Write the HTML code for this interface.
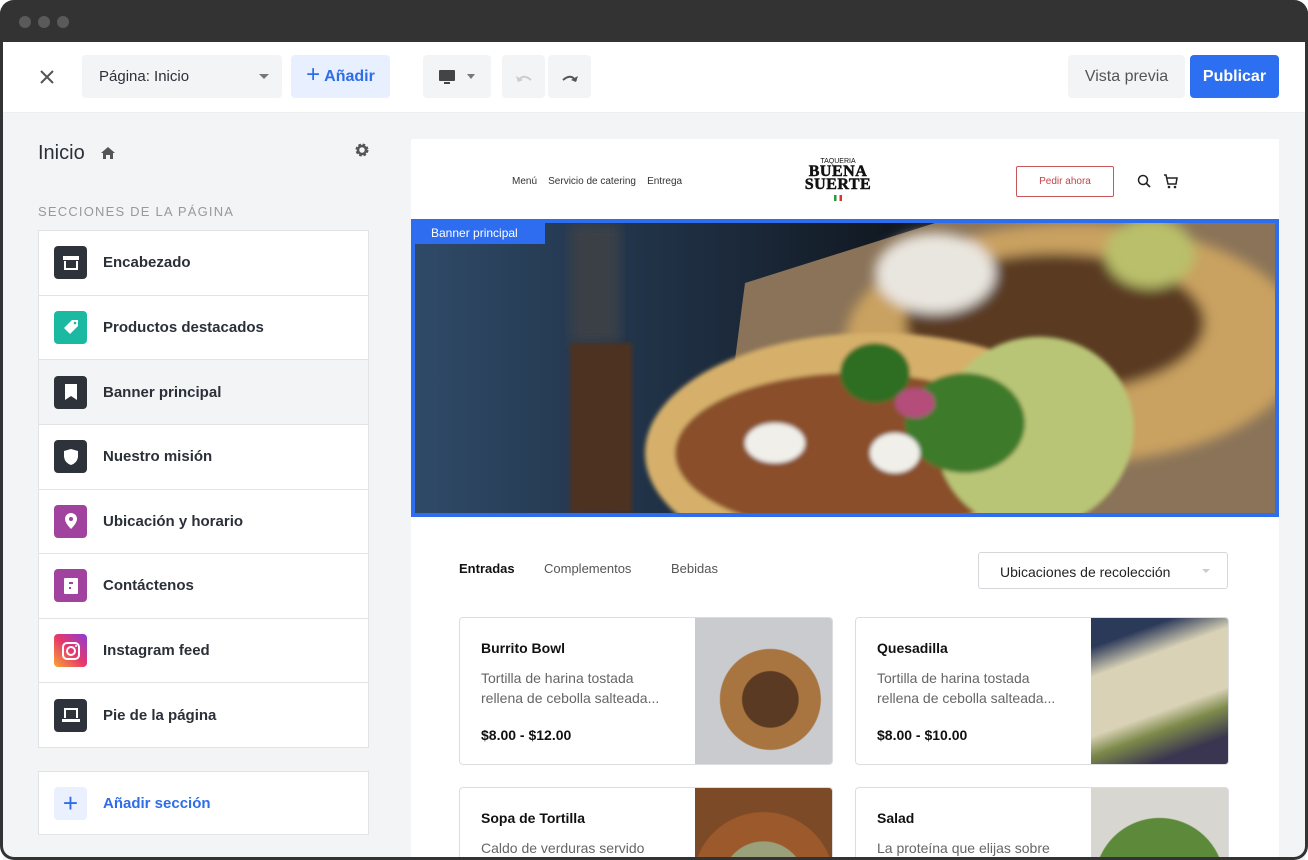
<!DOCTYPE html>
<html><head><meta charset="utf-8"><style>
*{box-sizing:border-box;margin:0;padding:0}
html,body{width:1308px;height:860px;overflow:hidden}
body{background:#fff;font-family:"Liberation Sans",sans-serif;position:relative}
.a{position:absolute}
.frame{left:0;top:0;width:1308px;height:860px;border:3px solid #333;border-top:none;border-radius:14px;pointer-events:none;z-index:50}
.tb{left:0;top:0;width:1308px;height:42px;background:#333;border-radius:14px 14px 0 0}
.dot{width:12px;height:12px;border-radius:50%;background:#5a5a5a;top:16px}
.btn{border-radius:4px;background:#f3f4f6;display:flex;align-items:center;justify-content:center;font-size:15px}
.list{left:38px;top:230px;width:331px;height:518px;border:1px solid #e1e3e6;display:flex;flex-direction:column;background:#fff}
.row{flex:1;display:flex;align-items:center;font-size:15px;font-weight:bold;color:#2b3038;border-bottom:1px solid #e1e3e6}
.row:last-child{border-bottom:none}
.ic{width:33px;height:33px;border-radius:4px;margin:0 16px 0 15px;display:flex;align-items:center;justify-content:center}
.card{width:374px;height:148px;background:#fff;border:1px solid #dcdde0;border-radius:4px;overflow:hidden}
.card h4{position:absolute;left:21px;top:22px;font-size:14px;color:#111}
.card p{position:absolute;left:21px;top:50px;font-size:14px;color:#666;line-height:20px}
.card b{position:absolute;left:21px;top:109px;font-size:14px;color:#111}
.card .im{position:absolute;right:0;top:0;width:137px;height:148px}
.short{height:73px;border-bottom:none;border-radius:4px 4px 0 0}
</style></head><body>
<div class="a tb"></div>
<div class="a dot" style="left:19px"></div><div class="a dot" style="left:38px"></div><div class="a dot" style="left:57px"></div>
<div class="a" style="left:3px;top:42px;width:1302px;height:71px;background:#fff;border-bottom:1px solid #eceef0"></div>
<svg class="a" style="left:39px;top:69px" width="16" height="16"><path d="M2 2L14 14M14 2L2 14" stroke="#555" stroke-width="2"/></svg>
<div class="a btn" style="left:82px;top:55px;width:200px;height:43px;justify-content:flex-start;padding-left:17px;color:#2b3038">Página: Inicio<span style="position:absolute;right:13px;top:19px;border:5px solid transparent;border-top:5px solid #777;border-bottom:none"></span></div>
<div class="a btn" style="left:291px;top:55px;width:99px;height:43px;background:#e8efff;color:#2e6de8;font-weight:bold;font-size:16px"><span style="font-size:24px;font-weight:normal;margin-right:4px;margin-top:-3px">+</span>Añadir</div>
<div class="a btn" style="left:423px;top:55px;width:68px;height:43px"><svg width="16" height="14"><rect x="0" y="0" width="16" height="11" rx="1" fill="#444"/><rect x="5" y="12" width="6" height="2" fill="#444"/></svg><span style="margin-left:12px;border:4px solid transparent;border-top:5px solid #777;border-bottom:none"></span></div>
<div class="a btn" style="left:502px;top:55px;width:43px;height:43px"><svg width="18" height="12"><path d="M3 10Q8 2 16 9" stroke="#ccc" stroke-width="2" fill="none"/><path d="M1 5L3 11L8 9Z" fill="#ccc"/></svg></div>
<div class="a btn" style="left:548px;top:55px;width:43px;height:43px"><svg width="18" height="12"><path d="M15 10Q10 2 2 9" stroke="#555" stroke-width="2" fill="none"/><path d="M17 5L15 11L10 9Z" fill="#555"/></svg></div>
<div class="a btn" style="left:1068px;top:55px;width:117px;height:43px;color:#555;font-size:16px">Vista previa</div>
<div class="a btn" style="left:1190px;top:55px;width:89px;height:43px;background:#2c6ff0;color:#fff;font-weight:bold;font-size:16px">Publicar</div>
<div class="a" style="left:3px;top:113px;width:1302px;height:747px;background:#f3f4f6"></div>
<div class="a" style="left:38px;top:142px;font-size:20px;color:#2b3038">Inicio</div>
<svg class="a" style="left:100px;top:146px" width="16" height="14"><path d="M8 1L1 7H3V13H6V9H10V13H13V7H15Z" fill="#555"/></svg>
<svg class="a" style="left:354px;top:142px" width="16" height="16" viewBox="0 0 16 16"><circle cx="8" cy="8" r="5" fill="none" stroke="#555" stroke-width="3" stroke-dasharray="2.4 1.6"/><circle cx="8" cy="8" r="4" fill="none" stroke="#555" stroke-width="2.5"/></svg>
<div class="a" style="left:38px;top:204px;font-size:13px;letter-spacing:1.2px;color:#999">SECCIONES DE LA PÁGINA</div>
<div class="a list">
<div class="row"><div class="ic" style="background:#2e333b"><svg width="18" height="16"><rect x="1" y="1" width="16" height="4" fill="#fff"/><path d="M2 6V15H16V6H14V13H4V6Z" fill="#fff"/></svg></div>Encabezado</div>
<div class="row"><div class="ic" style="background:#1bb9a1"><svg width="18" height="18"><path d="M10 2H16V8L8 16L2 10Z" fill="#fff"/><circle cx="13" cy="5" r="1.3" fill="#1bb9a1"/></svg></div>Productos destacados</div>
<div class="row" style="background:#f3f4f6"><div class="ic" style="background:#2e333b"><svg width="16" height="18"><path d="M2 1H14V17L8 13L2 17Z" fill="#fff"/></svg></div>Banner principal</div>
<div class="row"><div class="ic" style="background:#2e333b"><svg width="16" height="18"><path d="M8 1L15 3V9Q14 15 8 17Q2 15 1 9V3Z" fill="#fff"/></svg></div>Nuestro misión</div>
<div class="row"><div class="ic" style="background:#a0429e"><svg width="14" height="18"><path d="M7 1A6 6 0 0 1 13 7Q13 11 7 17Q1 11 1 7A6 6 0 0 1 7 1Z" fill="#fff"/><circle cx="7" cy="7" r="2" fill="#a0429e"/></svg></div>Ubicación y horario</div>
<div class="row"><div class="ic" style="background:#a0429e"><svg width="14" height="16"><rect x="0" y="0" width="14" height="16" rx="1" fill="#fff"/><rect x="5" y="4" width="4" height="2" fill="#a0429e"/><rect x="5" y="9" width="2" height="2" fill="#a0429e"/></svg></div>Contáctenos</div>
<div class="row"><div class="ic" style="background:linear-gradient(45deg,#f8a532,#e6386c 50%,#8a3bd8)"><svg width="20" height="20"><rect x="2" y="2" width="16" height="16" rx="4" fill="none" stroke="#fff" stroke-width="2"/><circle cx="10" cy="10" r="4" fill="none" stroke="#fff" stroke-width="2"/><circle cx="15" cy="5" r="1" fill="#fff"/></svg></div>Instagram feed</div>
<div class="row"><div class="ic" style="background:#2e333b"><svg width="20" height="16"><path d="M3 1H17V11H15V3H5V11H3Z" fill="#fff"/><rect x="1" y="12" width="18" height="3" fill="#fff"/></svg></div>Pie de la página</div>
</div>
<div class="a list" style="top:771px;height:64px"><div class="row" style="color:#2e6de8"><div class="ic" style="background:#eaf0fd;color:#2e6de8;font-size:26px;font-weight:normal">+</div>Añadir sección</div></div>
<div class="a" style="left:411px;top:139px;width:868px;height:721px;background:#fff;overflow:hidden">
<div class="a" style="left:101px;top:37px;font-size:10px;color:#333">Menú&nbsp;&nbsp;&nbsp;&nbsp;Servicio de catering&nbsp;&nbsp;&nbsp;&nbsp;Entrega</div>
<div class="a" style="left:375px;top:19px;width:104px;text-align:center;font-family:'Liberation Serif',serif;color:#111">
<div style="font-size:7px;font-family:'Liberation Sans'">TAQUERIA</div>
<div style="font-size:16px;font-weight:900;line-height:13px;letter-spacing:0.5px;-webkit-text-stroke:0.5px #111">BUENA<br>SUERTE</div>
<div style="margin:4px auto 0;width:8px;height:6px;background:linear-gradient(90deg,#2a9a3c 33%,#fff 33% 66%,#d33 66%)"></div></div>
<div class="a" style="left:605px;top:27px;width:98px;height:31px;border:1px solid #c8565b;border-radius:2px;color:#c0444a;font-size:10px;display:flex;align-items:center;justify-content:center">Pedir ahora</div>
<svg class="a" style="left:726px;top:35px" width="14" height="14"><circle cx="6" cy="6" r="4.5" fill="none" stroke="#222" stroke-width="1.5"/><path d="M9 9L13 13" stroke="#222" stroke-width="1.6"/></svg>
<svg class="a" style="left:752px;top:35px" width="16" height="15"><path d="M1 1H3L5 10H13L14 4H4" fill="none" stroke="#222" stroke-width="1.5"/><circle cx="6" cy="13" r="1.3" fill="#222"/><circle cx="12" cy="13" r="1.3" fill="#222"/></svg>
<div class="a" style="left:0;top:80px;width:868px;height:298px;border:4px solid #2e6df0;overflow:hidden;background:#1d2a3d">
<svg width="860" height="290" style="display:block">
<defs><linearGradient id="w" x1="0" x2="1"><stop offset="0" stop-color="#2f4a68"/><stop offset=".4" stop-color="#1a2737"/><stop offset=".55" stop-color="#111821"/><stop offset="1" stop-color="#6b5a44"/></linearGradient>
<filter id="b"><feGaussianBlur stdDeviation="6"/></filter><filter id="b2"><feGaussianBlur stdDeviation="2"/></filter></defs>
<rect width="860" height="290" fill="url(#w)"/>
<polygon points="300,290 330,60 520,0 860,0 860,290" fill="#8a7358"/>
<g filter="url(#b)"><ellipse cx="660" cy="120" rx="230" ry="120" fill="#c9a161"/><ellipse cx="640" cy="100" rx="150" ry="70" fill="#5a3a22"/><ellipse cx="520" cy="50" rx="60" ry="40" fill="#e9e6df"/><ellipse cx="735" cy="30" rx="45" ry="35" fill="#b9bf6a"/></g>
<rect x="155" y="0" width="50" height="120" fill="#3a3f46" filter="url(#b)"/>
<rect x="155" y="120" width="62" height="170" fill="#4e3324" filter="url(#b2)"/>
<g filter="url(#b2)"><ellipse cx="460" cy="230" rx="230" ry="120" fill="#d6b06b"/><ellipse cx="440" cy="230" rx="180" ry="80" fill="#8a4f2a"/><ellipse cx="620" cy="210" rx="100" ry="95" fill="#b9c576" transform="rotate(-30 620 210)"/><ellipse cx="550" cy="200" rx="60" ry="50" fill="#3c7a2a"/><ellipse cx="360" cy="220" rx="30" ry="20" fill="#f1efe9"/><ellipse cx="480" cy="230" rx="25" ry="20" fill="#f1efe9"/><ellipse cx="460" cy="150" rx="35" ry="30" fill="#2f6e24"/><ellipse cx="500" cy="180" rx="20" ry="15" fill="#b44d7a"/></g>
</svg>
<div class="a" style="left:0;top:0;width:130px;height:21px;background:#2e6df0;color:#fff;font-size:12px;padding:3px 0 0 16px">Banner principal</div>
</div>
<div class="a" style="left:48px;top:422px;font-size:13px;color:#111;font-weight:bold">Entradas</div>
<div class="a" style="left:133px;top:422px;font-size:13px;color:#555">Complementos</div>
<div class="a" style="left:260px;top:422px;font-size:13px;color:#555">Bebidas</div>
<div class="a" style="left:567px;top:413px;width:250px;height:37px;border:1px solid #d6d7da;border-radius:3px;font-size:14px;color:#222;padding:11px 0 0 21px">Ubicaciones de recolección<span style="position:absolute;right:17px;top:16px;border:4px solid transparent;border-top:4px solid #ccc;border-bottom:none"></span></div>
<div class="a card" style="left:48px;top:478px"><h4>Burrito Bowl</h4><p>Tortilla de harina tostada<br>rellena de cebolla salteada...</p><b>$8.00 - $12.00</b><div class="im" style="background:radial-gradient(circle at 55% 55%,#5a3a22 0 25%,#a8743f 26% 45%,#c9cbcf 46%)"></div></div>
<div class="a card" style="left:444px;top:478px"><h4>Quesadilla</h4><p>Tortilla de harina tostada<br>rellena de cebolla salteada...</p><b>$8.00 - $10.00</b><div class="im" style="background:linear-gradient(160deg,#2c3a5a 0 15%,#d9d2b6 30% 60%,#7d8a4a 70%,#3a3550 85%)"></div></div>
<div class="a card short" style="left:48px;top:648px"><h4>Sopa de Tortilla</h4><p>Caldo de verduras servido</p><div class="im" style="height:73px;background:radial-gradient(circle at 50% 130%,#9aa07a 0 35%,#9c5a2c 36% 60%,#7c4a26 61%)"></div></div>
<div class="a card short" style="left:444px;top:648px"><h4>Salad</h4><p>La proteína que elijas sobre</p><div class="im" style="height:73px;background:radial-gradient(circle at 50% 130%,#5c8a3a 0 55%,#d8d6d0 56%)"></div></div>
</div>
<div class="a frame"></div>
</body></html>
